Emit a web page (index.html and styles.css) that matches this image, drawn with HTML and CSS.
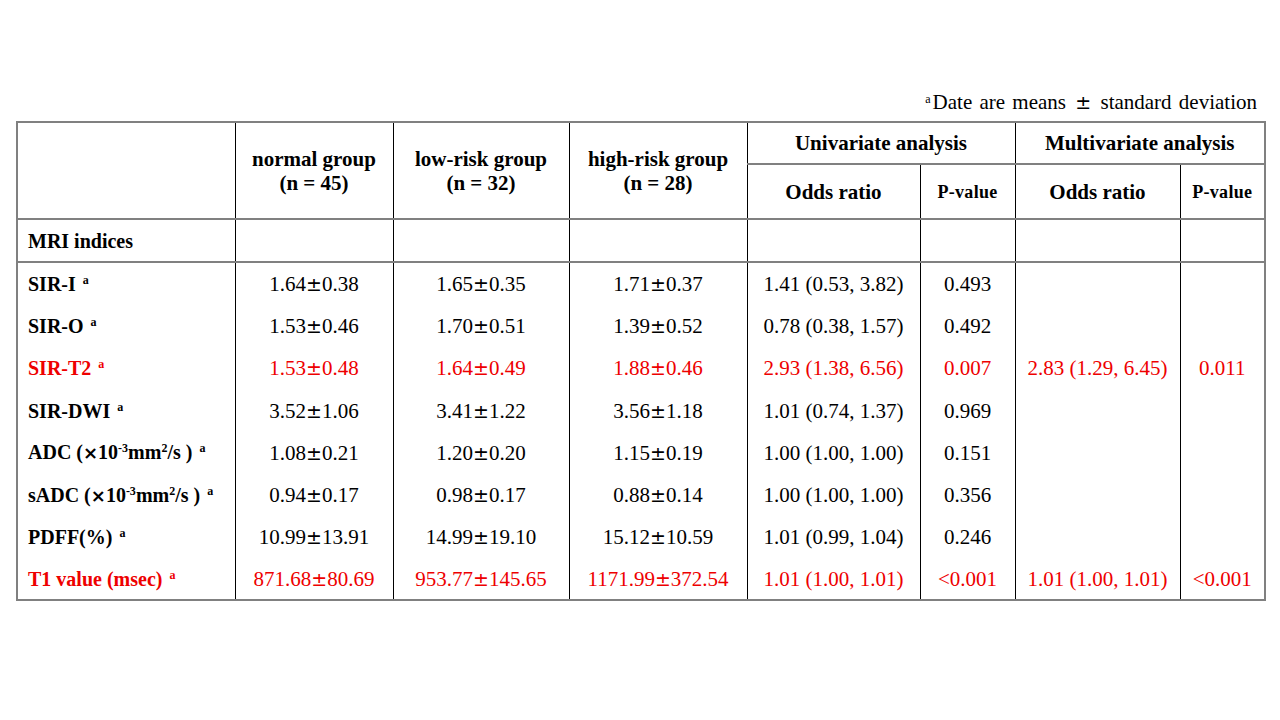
FILE: index.html
```html
<!DOCTYPE html>
<html lang="en">
<head>
<meta charset="utf-8">
<title>MRI indices table</title>
<link rel="stylesheet" href="styles.css">
</head>
<body>
<div class="page">
  <p class="note"><span class="nsup">a</span>Date are means <span class="pm">±</span> standard deviation</p>
  <table class="tbl">
    <colgroup>
      <col class="c1"><col class="c2"><col class="c3"><col class="c4"><col class="c5"><col class="c6"><col class="c7"><col class="c8">
    </colgroup>
    <thead>
      <tr class="h1">
        <th rowspan="2"></th>
        <th rowspan="2">normal group<br>(n = 45)</th>
        <th rowspan="2">low-risk group<br>(n = 32)</th>
        <th rowspan="2">high-risk group<br>(n = 28)</th>
        <th colspan="2">Univariate analysis</th>
        <th colspan="2">Multivariate analysis</th>
      </tr>
      <tr class="h2">
        <th>Odds ratio</th>
        <th class="pv">P-value</th>
        <th>Odds ratio</th>
        <th class="pv">P-value</th>
      </tr>
    </thead>
    <tbody>
      <tr class="section">
        <td class="label">MRI indices</td><td></td><td></td><td></td><td></td><td></td><td></td><td></td>
      </tr>
      <tr class="first">
        <td class="label">SIR-I <span class="sup">a</span></td>
        <td>1.64<span class="pm">±</span>0.38</td>
        <td>1.65<span class="pm">±</span>0.35</td>
        <td>1.71<span class="pm">±</span>0.37</td>
        <td>1.41 (0.53, 3.82)</td>
        <td>0.493</td>
        <td></td><td></td>
      </tr>
      <tr>
        <td class="label">SIR-O <span class="sup">a</span></td>
        <td>1.53<span class="pm">±</span>0.46</td>
        <td>1.70<span class="pm">±</span>0.51</td>
        <td>1.39<span class="pm">±</span>0.52</td>
        <td>0.78 (0.38, 1.57)</td>
        <td>0.492</td>
        <td></td><td></td>
      </tr>
      <tr class="hl">
        <td class="label">SIR-T2 <span class="sup">a</span></td>
        <td>1.53<span class="pm">±</span>0.48</td>
        <td>1.64<span class="pm">±</span>0.49</td>
        <td>1.88<span class="pm">±</span>0.46</td>
        <td>2.93 (1.38, 6.56)</td>
        <td>0.007</td>
        <td>2.83 (1.29, 6.45)</td>
        <td>0.011</td>
      </tr>
      <tr>
        <td class="label">SIR-DWI <span class="sup">a</span></td>
        <td>3.52<span class="pm">±</span>1.06</td>
        <td>3.41<span class="pm">±</span>1.22</td>
        <td>3.56<span class="pm">±</span>1.18</td>
        <td>1.01 (0.74, 1.37)</td>
        <td>0.969</td>
        <td></td><td></td>
      </tr>
      <tr>
        <td class="label">ADC (<span class="x">×</span>10<span class="exp">-3</span>mm<span class="exp">2</span>/s ) <span class="sup">a</span></td>
        <td>1.08<span class="pm">±</span>0.21</td>
        <td>1.20<span class="pm">±</span>0.20</td>
        <td>1.15<span class="pm">±</span>0.19</td>
        <td>1.00 (1.00, 1.00)</td>
        <td>0.151</td>
        <td></td><td></td>
      </tr>
      <tr>
        <td class="label">sADC (<span class="x">×</span>10<span class="exp">-3</span>mm<span class="exp">2</span>/s ) <span class="sup">a</span></td>
        <td>0.94<span class="pm">±</span>0.17</td>
        <td>0.98<span class="pm">±</span>0.17</td>
        <td>0.88<span class="pm">±</span>0.14</td>
        <td>1.00 (1.00, 1.00)</td>
        <td>0.356</td>
        <td></td><td></td>
      </tr>
      <tr>
        <td class="label">PDFF(%) <span class="sup">a</span></td>
        <td>10.99<span class="pm">±</span>13.91</td>
        <td>14.99<span class="pm">±</span>19.10</td>
        <td>15.12<span class="pm">±</span>10.59</td>
        <td>1.01 (0.99, 1.04)</td>
        <td>0.246</td>
        <td></td><td></td>
      </tr>
      <tr class="hl last">
        <td class="label">T1 value (msec) <span class="sup">a</span></td>
        <td>871.68<span class="pm">±</span>80.69</td>
        <td>953.77<span class="pm">±</span>145.65</td>
        <td>1171.99<span class="pm">±</span>372.54</td>
        <td>1.01 (1.00, 1.01)</td>
        <td>&lt;0.001</td>
        <td>1.01 (1.00, 1.01)</td>
        <td>&lt;0.001</td>
      </tr>
    </tbody>
  </table>
</div>
</body>
</html>
```

FILE: styles.css
```css
html, body {
  margin: 0;
  padding: 0;
  background: #ffffff;
}

body {
  font-family: "Liberation Serif", "Times New Roman", serif;
  color: #000000;
}

.page {
  width: 1248px;
  padding: 90px 16px 0 16px;
}

.note {
  margin: 0 7px 7px 0;
  text-align: right;
  font-size: 21px;
  line-height: 24px;
  word-spacing: 2px;
}

.nsup {
  font-size: 12px;
  vertical-align: 6px;
  line-height: 0;
  margin-right: 2px;
}

.tbl {
  width: 1248px;
  table-layout: fixed;
  border-collapse: collapse;
  border: 2px solid #808080;
}

.c1 { width: 218px; }
.c2 { width: 158px; }
.c3 { width: 176px; }
.c4 { width: 178px; }
.c5 { width: 173px; }
.c6 { width: 95px; }
.c7 { width: 165px; }
.c8 { width: 85px; }

th, td {
  padding: 0;
  border-left: 1px solid #000000;
  border-right: 1px solid #000000;
  text-align: center;
  vertical-align: middle;
}

th {
  font-size: 21px;
  font-weight: bold;
  line-height: 24px;
  border-bottom: 2px solid #808080;
}

.h1 th {
  height: 40px;
}

.h2 th {
  height: 53px;
}

.pv {
  font-size: 18px;
  letter-spacing: 0.3px;
}

td {
  font-size: 21px;
  line-height: 24px;
  height: 42.2px;
}

.section td {
  height: 41px;
  border-bottom: 2px solid #808080;
}

.last td {
  height: 41px;
}

.label {
  text-align: left;
  padding-left: 10px;
  font-weight: bold;
  font-size: 20px;
}

.sup {
  font-size: 12px;
  vertical-align: 7px;
  line-height: 0;
  margin-left: 2px;
}

.exp {
  font-size: 12px;
  vertical-align: 7px;
  line-height: 0;
}

.x {
  font-family: "DejaVu Sans", sans-serif;
  font-size: 18px;
  font-weight: bold;
}

.pm {
  font-family: "DejaVu Sans", sans-serif;
  font-size: 19px;
}

.note .pm {
  margin: 0 2px;
}

.hl td {
  color: #ee0000;
}
```
